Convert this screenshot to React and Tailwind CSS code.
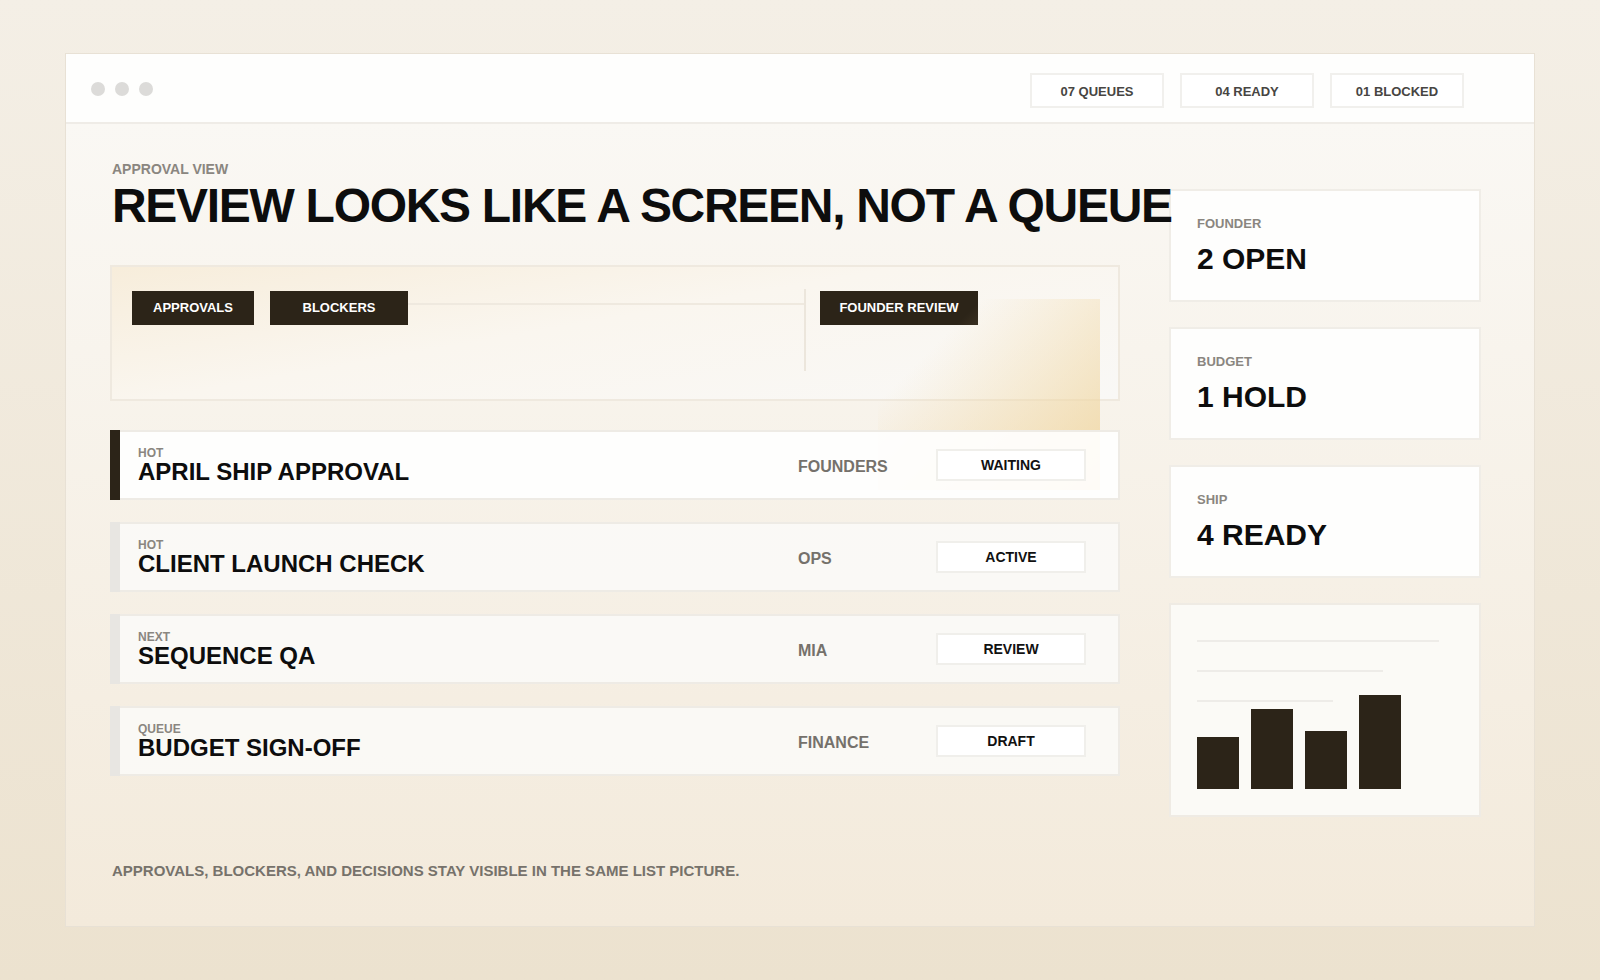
import React from "react";

// Filas de la lista de aprobaciones
const rows = [
  { tag: "HOT", title: "APRIL SHIP APPROVAL", owner: "FOUNDERS", status: "WAITING", active: true },
  { tag: "HOT", title: "CLIENT LAUNCH CHECK", owner: "OPS", status: "ACTIVE" },
  { tag: "NEXT", title: "SEQUENCE QA", owner: "MIA", status: "REVIEW" },
  { tag: "QUEUE", title: "BUDGET SIGN-OFF", owner: "FINANCE", status: "DRAFT" },
];

const stats = [
  { label: "FOUNDER", value: "2 OPEN" },
  { label: "BUDGET", value: "1 HOLD" },
  { label: "SHIP", value: "4 READY" },
];

const pills = ["07 QUEUES", "04 READY", "01 BLOCKED"];

function Chart() {
  const bars = [
    { x: 0, h: 52 },
    { x: 54, h: 80 },
    { x: 108, h: 58 },
    { x: 162, h: 94 },
  ];
  return (
    <svg width="254" height="150" viewBox="0 0 254 150">
      <rect x="0" y="1" width="242" height="2" fill="#eeece8" />
      <rect x="0" y="31" width="186" height="2" fill="#eeece8" />
      <rect x="0" y="61" width="136" height="2" fill="#eeece8" />
      {bars.map((b) => (
        <rect key={b.x} x={b.x} y={150 - b.h} width="42" height={b.h} fill="#2c2418" />
      ))}
    </svg>
  );
}

export default function App() {
  return (
    <div
      className="min-h-screen w-full bg-gradient-to-b from-[#f4efe6] to-[#ece2cf] px-[65px] pt-[53px]"
      style={{ fontFamily: '"Liberation Sans", Arial, sans-serif' }}
    >
      <div className="h-[874px] border border-[#e8e1d5] flex flex-col">
        {/* --- CABECERA --- */}
        <div className="h-[70px] bg-[#fefefd] border-b-2 border-[#efece7] flex items-center pl-[25px] pr-[70px]">
          <div className="flex gap-[10px] mt-[2px]">
            <span className="w-[14px] h-[14px] rounded-full bg-[#dcdbd9]" />
            <span className="w-[14px] h-[14px] rounded-full bg-[#dcdbd9]" />
            <span className="w-[14px] h-[14px] rounded-full bg-[#dcdbd9]" />
          </div>
          <div className="ml-auto flex gap-[16px] mt-[5px]">
            {pills.map((p) => (
              <div
                key={p}
                className="w-[134px] h-[35px] border-2 border-[#f1f0ed] bg-white flex items-center justify-center pt-[2px] text-[13px] font-bold text-[#474542]"
              >
                {p}
              </div>
            ))}
          </div>
        </div>

        {/* --- CUERPO --- */}
        <div className="flex-1 bg-gradient-to-b from-[#faf8f4] to-[#f3eadb] pl-[44px] pr-[52px] pt-[37px]">
          <div className="grid grid-cols-[1010px_312px] gap-x-[49px]">
            <div>
              <p className="ml-[2px] text-[14px] leading-[17px] font-bold text-[#8a8680]">APPROVAL VIEW</p>
              <h1 className="relative z-10 ml-[2px] mt-[2px] text-[48px] leading-[52px] font-bold tracking-[-0.027em] whitespace-nowrap text-[#0d0d0d]">
                REVIEW LOOKS LIKE A SCREEN, NOT A QUEUE
              </h1>

              {/* Panel de filtros */}
              <div className="relative mt-[33px] h-[136px] border-2 border-[#efe9df] bg-[linear-gradient(170deg,#f7eddb_0%,#faf6ef_45%,#f9f8f6_100%)] pl-[20px] pt-[24px] flex items-start">
                <div className="w-[672px] flex items-start">
                  <button className="w-[122px] h-[34px] bg-[#2c2418] text-white text-[13px] font-bold">APPROVALS</button>
                  <button className="ml-[16px] w-[138px] h-[34px] bg-[#2c2418] text-white text-[13px] font-bold">BLOCKERS</button>
                  <div className="flex-1 h-[2px] mt-[12px] bg-[#efe9df]" />
                </div>
                <div className="w-[2px] h-[82px] -mt-[2px] bg-[#ece6dc]" />
                <button className="ml-[14px] w-[158px] h-[34px] bg-[#2c2418] text-white text-[13px] font-bold">
                  FOUNDER REVIEW
                </button>
                <div className="absolute left-[766px] top-[32px] w-[222px] h-[191px] bg-[linear-gradient(135deg,rgba(247,236,214,0)_25%,rgba(240,214,160,0.9)_100%)]" />
              </div>

              {/* Lista */}
              <div className="relative z-10 mt-[29px] flex flex-col gap-[22px]">
                {rows.map((r) => (
                  <div key={r.title} className="flex h-[70px]">
                    <div className={`w-[10px] ${r.active ? "bg-[#2c2418]" : "bg-[#e8e6e2]"}`} />
                    <div
                      className={`flex-1 flex items-center border-2 border-l-0 border-[#eeebe5] pl-[18px] pr-[32px] ${
                        r.active ? "bg-white/90" : "bg-[#fbfaf7]/90"
                      }`}
                    >
                      <div className="flex-1">
                        <p className="text-[12px] leading-[14px] font-bold text-[#8a8680]">{r.tag}</p>
                        <p className="-mt-[1px] text-[24px] leading-[26px] font-bold text-[#0d0d0d]">{r.title}</p>
                      </div>
                      <div className="w-[138px] mt-[4px] text-[16px] font-bold text-[#75716b]">{r.owner}</div>
                      <div className="w-[150px] h-[32px] border-2 border-[#f0efeb] bg-white flex items-center justify-center text-[14px] font-bold text-[#111]">
                        {r.status}
                      </div>
                    </div>
                  </div>
                ))}
              </div>
            </div>

            {/* --- COLUMNA DERECHA --- */}
            <div className="mt-[28px] flex flex-col gap-[25px]">
              {stats.map((s) => (
                <div key={s.label} className="h-[113px] border-2 border-[#f0ede7] bg-[#fefefd] px-[26px] pt-[25px]">
                  <p className="text-[13px] leading-[16px] font-bold text-[#8a8680]">{s.label}</p>
                  <p className="mt-[9px] text-[30px] leading-[36px] font-bold text-[#0d0d0d]">{s.value}</p>
                </div>
              ))}
              <div className="h-[214px] border-2 border-[#efebe4] bg-[#fbfaf6] px-[26px] pt-[34px]">
                <Chart />
              </div>
            </div>
          </div>

          <p className="mt-[45px] ml-[2px] text-[15px] leading-[18px] font-bold text-[#76726b]">
            APPROVALS, BLOCKERS, AND DECISIONS STAY VISIBLE IN THE SAME LIST PICTURE.
          </p>
        </div>
      </div>
    </div>
  );
}
